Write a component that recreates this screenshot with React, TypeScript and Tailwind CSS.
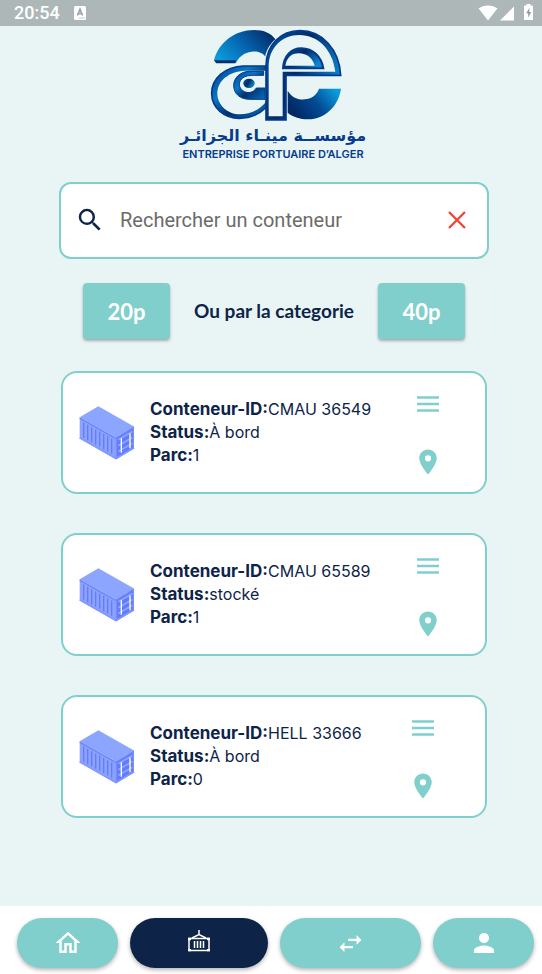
import { useState } from "react";
import {
  MdSearch,
  MdLocationOn,
  MdOutlineHome,
  MdSwapHoriz,
  MdPerson,
} from "react-icons/md";

type Container = { id: string; status: string; parc: string };

const containers: Container[] = [
  { id: "CMAU 36549", status: "À bord", parc: "1" },
  { id: "CMAU 65589", status: "stocké", parc: "1" },
  { id: "HELL 33666", status: "À bord", parc: "0" },
];

function StatusBar() {
  return (
    <div className="flex h-[26px] items-center justify-between bg-[#adb7b7] pr-[9px] pl-[14px] text-white">
      <div className="flex items-center gap-[14px]">
        <span className="font-['Roboto',sans-serif] text-lg leading-6 font-medium">20:54</span>
        <svg width="12" height="14" viewBox="0 0 12 14" aria-hidden="true">
          <rect width="12" height="14" rx="1.5" fill="#fff" />
          <path d="M3.4 9.5 6 3.2l2.6 6.3M4.3 7.6h3.4" fill="none" stroke="#8f9a9a" strokeWidth="1.4" />
          <path d="M5.5 12h1M7.5 12h1M9.5 12h1" stroke="#8f9a9a" strokeWidth="1" />
        </svg>
      </div>
      <div className="flex items-center">
        <svg width="20" height="16" viewBox="0 0 20 16" fill="#fff" aria-hidden="true">
          <path d="M10 15.500.6 3.600C3.200 1.600 6.400.500 10 .500s6.800 1.100 9.400 3.100z" />
        </svg>
        <svg className="ml-[2px]" width="14" height="16" viewBox="0 0 14 16" fill="#fff" aria-hidden="true">
          <path d="M14 1.500v14H0z" />
        </svg>
        <svg className="ml-[10px]" width="9" height="18" viewBox="0 0 9 18" aria-hidden="true">
          <path d="M2.500 0h4v1.500H8a1 1 0 0 1 1 1V16H0V2.500a1 1 0 0 1 1-1h1.500z" fill="#fff" />
          <path d="M5.500 3.800 2.200 9.200h2v4.300l3-5.500h-2z" fill="#8f9a9a" />
        </svg>
      </div>
    </div>
  );
}

function Logo() {
  return (
    <div className="flex flex-col items-center">
      <svg className="ml-1.5" width="138" height="98" viewBox="0 0 414 294" role="img" aria-label="Logo EPAL">
        <defs>
          <linearGradient id="swoosh" x1="0" y1="0.7" x2="1" y2="0.2">
            <stop offset="0" stopColor="#0a9bdc" />
            <stop offset="0.5" stopColor="#0563ad" />
            <stop offset="1" stopColor="#022a66" />
          </linearGradient>
          <linearGradient id="tail" x1="0.1" y1="0.7" x2="1" y2="0.3">
            <stop offset="0" stopColor="#022a66" />
            <stop offset="0.5" stopColor="#034a94" />
            <stop offset="1" stopColor="#0a9bdc" />
          </linearGradient>
          <linearGradient id="ring" x1="0" y1="0" x2="1" y2="1">
            <stop offset="0" stopColor="#023b8a" />
            <stop offset="0.35" stopColor="#0a78c4" />
            <stop offset="0.6" stopColor="#02306f" />
            <stop offset="1" stopColor="#0673bd" />
          </linearGradient>
          <linearGradient id="bowl" x1="0" y1="0" x2="1" y2="0.5">
            <stop offset="0" stopColor="#0458a8" />
            <stop offset="0.5" stopColor="#022a66" />
            <stop offset="1" stopColor="#0a86d0" />
          </linearGradient>
        </defs>
        <path d="M18 103C32 48 82 12 138 12c30 0 52 10 64 28-20 17-30 42-30 52-14-22-66-24-88 18H25z" fill="url(#swoosh)" />
        <path d="M18 103h66l-2 9H25z" fill="#022f70" />
        <path
          d="M174 120h-68C50 122 11 158 11 202c0 44 38 75 83 75 34 0 62-14 82-34z"
          fill="url(#ring)"
          stroke="#033a8e"
          strokeWidth="5"
        />
        <path d="M174 134h-64c-46 2-82 30-82 67 0 36 30 64 68 64 32 0 60-14 80-40z" fill="#e9f5f5" />
        <path
          d="M167 136h-42c-28 0-48 20-48 42 0 26 20 42 48 42h46v-34h-26c-10 18-34 17-45 4-10-12-6-26 4-34 8-7 22-8 36-8h27z"
          fill="url(#ring)"
          stroke="#033a8e"
          strokeWidth="3"
        />
        <ellipse cx="123" cy="172" rx="17" ry="14" fill="url(#bowl)" />
        <path
          d="M174 282V120C174 57 219 14 276 14c66 0 118 56 122 134H234v134z"
          fill="url(#bowl)"
          stroke="#033a8e"
          strokeWidth="5"
        />
        <path
          d="M182 271V122c0-56 40-95 92-95 56 0 100 44 108 110H224v134z"
          fill="#e9f5f5"
        />
        <path
          d="M225 127c2-38 24-60 55-60 36 0 60 26 66 60z"
          fill="url(#bowl)"
          stroke="#033a8e"
          strokeWidth="6"
        />
        <path d="M232 119c4-24 18-37 40-37 26 0 42 16 48 37z" fill="#e9f5f5" />
        <path d="M239 194c14 22 34 30 58 25 18-4 30-15 36-31h66c-8 54-48 90-98 92-26 0-48-8-62-20z" fill="url(#tail)" />
      </svg>
      <span
        lang="ar"
        dir="rtl"
        className="mr-0.5 font-['DejaVu_Sans',sans-serif] text-base leading-6 font-bold whitespace-nowrap text-[#063b8e]"
      >
        مؤسســة مينـاء الجزائـر
      </span>
      <span className="mr-0.5 font-['Inter',sans-serif] text-[11px] leading-3 font-semibold whitespace-nowrap text-[#063b8e]">
        ENTREPRISE PORTUAIRE D’ALGER
      </span>
    </div>
  );
}

function ContainerPicture() {
  return (
    <svg className="shrink-0" width="56" height="55" viewBox="26 30 168 164" aria-hidden="true">
      <path d="M28 66 84 33l107 61-54 33z" fill="#8ca6ff" />
      <path d="M28 66l109 61v65L28 130z" fill="#8ca2ff" />
      <path d="M137 127l54-33v66l-54 32z" fill="#637bfb" />
      <path d="M28 69l109 61 54-33" fill="none" stroke="#6c84f8" strokeWidth="4" />
      <path d="M28 128l109 62 54-32" fill="none" stroke="#8098ff" strokeWidth="5" />
      <path
        d="M40 82v46M52 89v46M64 96v46M76 103v46M88 109v46M100 116v46M112 123v46M124 130v46"
        stroke="#647df5"
        strokeWidth="4"
      />
      <path d="M144 134l42-25M144 152l42-25M144 169l42-25" stroke="#8ca6ff" strokeWidth="5" />
      <path d="M138 128v63M189 98v61" stroke="#7790ff" strokeWidth="4" />
      <path d="M153 129v44M179 115v44" stroke="#fff" strokeWidth="4" />
    </svg>
  );
}

function ContainerCard({ item }: { item: Container }) {
  return (
    <li className="flex h-[123px] items-center rounded-2xl border-2 border-[#80cfcc] bg-white pl-4 text-[#0d2448]">
      <ContainerPicture />
      <dl className="ml-[15px] font-['Inter',sans-serif] text-base leading-[23px] whitespace-nowrap">
        <div className="flex h-[23px] items-baseline">
          <dt className="text-[17px] leading-[23px] font-bold">Conteneur-ID:</dt>
          <dd>{item.id}</dd>
        </div>
        <div className="flex h-[23px] items-baseline">
          <dt className="text-[17px] leading-[23px] font-bold">Status:</dt>
          <dd>{item.status}</dd>
        </div>
        <div className="flex h-[23px] items-baseline">
          <dt className="text-[17px] leading-[23px] font-bold">Parc:</dt>
          <dd>{item.parc}</dd>
        </div>
      </dl>
      <div className="flex flex-1 flex-col items-center gap-7 text-[#80cfcc]">
        <button type="button" aria-label="Détails" className="flex h-[30px] w-[30px] items-center justify-center">
          <svg width="22" height="16" viewBox="0 0 22 16" aria-hidden="true">
            <path d="M0 1.500h22M0 8h22M0 14.500h22" stroke="currentColor" strokeWidth="2.300" />
          </svg>
        </button>
        <button type="button" aria-label="Localiser">
          <MdLocationOn size={30} />
        </button>
      </div>
    </li>
  );
}

function CraneContainerIcon() {
  return (
    <svg width="24" height="24" viewBox="0 0 24 24" fill="none" stroke="#fff" strokeWidth="1.500" aria-hidden="true">
      <path d="M12 1v4.500M5 9l7-3.500L19 9" />
      <rect x="2" y="9.500" width="20" height="12" />
      <path d="M1 8.700h3v2.500H1zM20 8.700h3v2.500h-3zM1 20h3v2.300H1zM20 20h3v2.300h-3z" fill="#fff" stroke="none" />
      <path d="M7.500 12v7M10.500 12v7M13.500 12v7M16.500 12v7" />
    </svg>
  );
}

const navShape = "flex h-[50px] items-center justify-center rounded-full shadow-[0_2px_4px_rgba(0,0,0,0.3)]";

const categoryShape =
  "h-14 w-[87px] rounded bg-[#80cfcc] text-[22px] text-white shadow-[0_2px_3px_rgba(0,0,0,0.3)]";

export default function App() {
  const [query, setQuery] = useState("");

  return (
    <div className="flex min-h-screen flex-col bg-[#e9f5f5]">
      <StatusBar />
      <main className="flex-1 pr-[53px] pl-[59px]">
        <header className="flex justify-center">
          <Logo />
        </header>

        <form
          role="search"
          onSubmit={(e) => e.preventDefault()}
          className="mt-[22px] flex h-[77px] items-center rounded-xl border-2 border-[#80cfcc] bg-white pr-5 pb-0.5 pl-[14px]"
        >
          <MdSearch size={30} className="shrink-0 text-[#0d2448]" />
          <input
            type="text"
            aria-label="Rechercher un conteneur"
            placeholder="Rechercher un conteneur"
            value={query}
            onChange={(e) => setQuery(e.target.value)}
            className="ml-[15px] min-w-0 flex-1 bg-transparent font-['Roboto',sans-serif] text-xl text-[#0d2448] outline-none placeholder:text-[#6b6b6b]"
          />
          <button type="button" aria-label="Effacer" onClick={() => setQuery("")}>
            <svg width="20" height="20" viewBox="0 0 20 20" aria-hidden="true">
              <path d="M2 2l16 16M18 2 2 18" stroke="#f44336" strokeWidth="2.300" />
            </svg>
          </button>
        </form>

        <div className="mt-6 flex items-center justify-center gap-6 font-['Lato',sans-serif] font-bold">
          <button type="button" className={categoryShape}>
            20p
          </button>
          <span className="text-[19px] whitespace-nowrap text-[#0d2448]">Ou par la categorie</span>
          <button type="button" className={categoryShape}>
            40p
          </button>
        </div>

        <ul className="mx-0.5 mt-8 mb-8 flex flex-col gap-[39px]">
          {containers.map((item) => (
            <ContainerCard key={item.id} item={item} />
          ))}
        </ul>
      </main>

      <nav className="flex h-[68px] items-start gap-3 bg-white pt-3 pr-2 pl-[17px] text-white">
        <button type="button" aria-label="Accueil" className={`${navShape} flex-[101] bg-[#80cfcc]`}>
          <MdOutlineHome size={30} />
        </button>
        <button type="button" aria-label="Conteneurs" className={`${navShape} flex-[138] bg-[#0d2448] pb-1`}>
          <CraneContainerIcon />
        </button>
        <button type="button" aria-label="Mouvements" className={`${navShape} flex-[141] bg-[#80cfcc]`}>
          <MdSwapHoriz size={29} />
        </button>
        <button type="button" aria-label="Profil" className={`${navShape} flex-[101] bg-[#80cfcc]`}>
          <MdPerson size={30} />
        </button>
      </nav>
    </div>
  );
}
